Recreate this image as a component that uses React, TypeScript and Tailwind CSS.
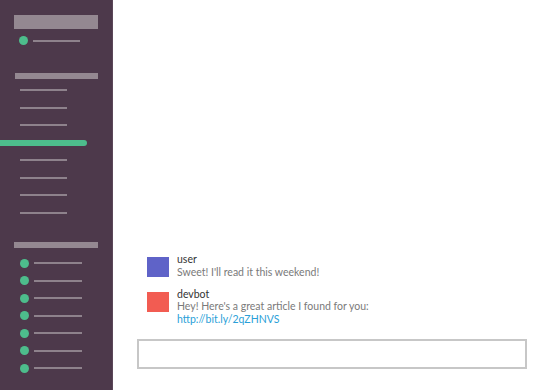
const channels = [0, 1, 2, 3, 4, 5, 6, 7]
const people = [0, 1, 2, 3, 4, 5, 6]

const messages = [
  { name: 'user', color: 'bg-[#5f63c8]', lines: ["Sweet! I'll read it this weekend!"] },
  { name: 'devbot', color: 'bg-[#f25c52]', lines: ["Hey! Here's a great article I found for you:"], link: 'http://bit.ly/2qZHNVS' },
]

function App() {
  return (
    <div className="flex h-[390px] w-[552px] overflow-hidden bg-white font-['Lato','Liberation_Sans',sans-serif]">
      <aside className="flex h-full w-[113px] shrink-0 flex-col border-r border-[#5b4759] bg-[#4d394b] pt-[15px]">
        <div className="ml-[14px] h-[14px] w-[84px] bg-[#948891]" />
        <div className="mt-[3px] flex h-[17.5px] items-center">
          <span className="ml-[19px] h-[9px] w-[9px] rounded-full bg-[#4dbd8c]" />
          <span className="ml-[5px] h-[2px] w-[47px] bg-[#8e828c]" />
        </div>

        <div className="ml-[15px] mt-[23px] h-[6px] w-[83px] bg-[#948891]" />
        <div className="mt-[3px] flex flex-col">
          {channels.map((i) =>
            i === 3 ? (
              <div key={i} className="flex h-[17.5px] items-center">
                <span className="h-[6px] w-[87px] rounded-r-full bg-[#4dbd8c]" />
              </div>
            ) : (
              <div key={i} className="flex h-[17.5px] items-center">
                <span className="ml-[20px] h-[2px] w-[47px] bg-[#8e828c]" />
              </div>
            ),
          )}
        </div>

        <div className="ml-[14px] mt-[20px] h-[6px] w-[84px] bg-[#948891]" />
        <div className="mt-[7px] flex flex-col">
          {people.map((i) => (
            <div key={i} className="flex h-[17.5px] items-center">
              <span className="ml-[20px] h-[9px] w-[9px] rounded-full bg-[#4dbd8c]" />
              <span className="ml-[5px] h-[2px] w-[48px] bg-[#8e828c]" />
            </div>
          ))}
        </div>
      </aside>

      <main className="flex flex-1 flex-col justify-end pb-[21px] pl-[24px] pr-[25px]">
        <div className="flex flex-col gap-[9.5px] pl-[10px]">
          {messages.map((m) => (
            <div key={m.name} className="flex gap-[8px]">
              <div className={`mt-[4px] h-[20px] w-[22px] shrink-0 ${m.color}`} />
              <div className="text-[10.5px] leading-[12.5px]">
                <p className="text-[#333333]">{m.name}</p>
                {m.lines.map((l) => (
                  <p key={l} className="text-[#7a7a7a]">{l}</p>
                ))}
                {m.link && <p className="text-[#2a9fd8]">{m.link}</p>}
              </div>
            </div>
          ))}
        </div>
        <div className="mt-[14px] h-[30px] w-full border-2 border-[#c7c7c7] bg-white" />
      </main>
    </div>
  )
}

export default App
